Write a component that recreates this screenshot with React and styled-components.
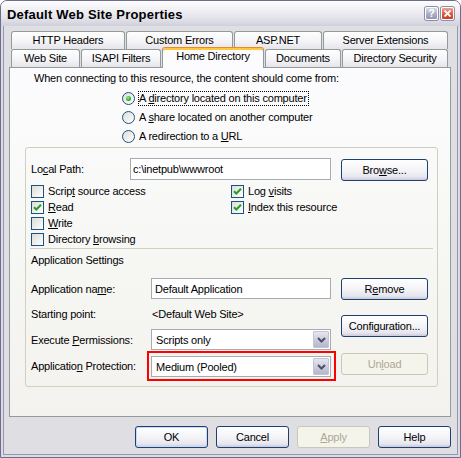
import React from 'react';
import styled, { createGlobalStyle, css } from 'styled-components';

const GlobalStyle = createGlobalStyle`
  * { box-sizing: border-box; }
  html, body { margin: 0; padding: 0; background: #ffffff; }
  body {
    font-family: "Liberation Sans", Arial, sans-serif;
    font-size: 11px;
    letter-spacing: -0.2px;
    color: #000;
  }
`;

const Window = styled.div`
  width: 461px;
  height: 458px;
  display: flex;
  flex-direction: column;
  border: 1px solid #6d6c8c;
  border-radius: 7px 7px 0 0;
  overflow: hidden;
  background: #dfdfe3;
`;

const TitleBar = styled.div`
  height: 25px;
  flex: none;
  display: flex;
  align-items: center;
  padding: 0 6px 0 6px;
  background: linear-gradient(to bottom, #fefefe 0%, #f3f3f6 30%, #e2e2e9 70%, #cfd0da 100%);
`;

const Title = styled.div`
  flex: 1;
  font-weight: bold;
  font-size: 13px;
  letter-spacing: 0.2px;
  color: #000;
  padding-top: 1px;
`;

const TitleButton = styled.div`
  width: 13px;
  height: 13px;
  margin-left: 3px;
  border-radius: 2px;
  border: 1px solid #ffffff;
  box-shadow: 0 0 0 1px #8d8ea6;
  display: flex;
  align-items: center;
  justify-content: center;
  color: #fff;
  font-weight: bold;
  font-size: 10px;
  letter-spacing: 0;
  line-height: 1;
  ${(p) =>
    p.$close
      ? css`
          background: linear-gradient(to bottom, #f0a08c, #d9553c 60%, #c2402b);
        `
      : css`
          background: linear-gradient(to bottom, #d8d9e6, #a9abc3 60%, #9496b3);
        `}
`;

const Body = styled.div`
  flex: 1;
  display: flex;
  flex-direction: column;
  border: 2px solid #dcdbe4;
  border-top: none;
  box-shadow: inset 1px 0 #9896ae, inset -1px 0 #9896ae, inset 0 -1px #9896ae;
  padding: 5px 7px 0 6px;
`;

const TabStrip = styled.div`
  display: flex;
  flex-direction: column;
  margin: 0 3px 0 2px;
`;

const TabRow = styled.div`
  display: flex;
  gap: 1px;
  height: 18px;
`;

const Tab = styled.div`
  width: ${(p) => p.$w}px;
  flex: none;
  border: 1px solid #919b9c;
  border-bottom: none;
  border-radius: 3px 3px 0 0;
  background: linear-gradient(to bottom, #ffffff, #f3f3f6 60%, #e4e4ea);
  text-align: center;
  line-height: 17px;
  white-space: nowrap;
  ${(p) =>
    p.$active &&
    css`
      position: relative;
      z-index: 2;
      height: 21px;
      margin-top: -2px;
      margin-bottom: -1px;
      background: #fcfcfe;
      border-top: 1px solid #e68b2c;
      box-shadow: inset 0 2px 0 #ffc83c;
      line-height: 17px;
    `}
`;

const Panel = styled.div`
  width: 442px;
  height: 350px;
  flex: none;
  border: 1px solid #919b9c;
  background: linear-gradient(to bottom, #fcfcfe, #f6f6f3 60%, #f3f2ee);
  display: flex;
  flex-direction: column;
  align-items: flex-start;
`;

const Intro = styled.div`
  margin: 3px 0 0 24px;
  line-height: 14px;
`;

const RadioList = styled.div`
  margin: 4px 0 0 112px;
  display: flex;
  flex-direction: column;
`;

const RadioRow = styled.div`
  height: 19px;
  display: flex;
  align-items: center;
`;

const RadioCircle = styled.span`
  width: 13px;
  height: 13px;
  flex: none;
  border-radius: 50%;
  border: 1px solid #1c5180;
  background: linear-gradient(135deg, #dcdcd7, #ffffff);
  display: flex;
  align-items: center;
  justify-content: center;
  &::after {
    content: '';
    width: 5px;
    height: 5px;
    border-radius: 50%;
    display: ${(p) => (p.$on ? 'block' : 'none')};
    background: radial-gradient(circle at 40% 35%, #8ef08a, #21a121 70%);
  }
`;

const OptionText = styled.span`
  margin-left: ${(p) => (p.$focus ? 3 : 4)}px;
  line-height: 13px;
  white-space: nowrap;
  ${(p) =>
    p.$focus &&
    css`
      border: 1px dotted #000;
      padding: 0 1px 0 0;
    `}
`;

const GroupBox = styled.div`
  width: 413px;
  margin: 1px 0 0 15px;
  border: 1px solid #d0d0bf;
  border-radius: 3px;
  padding: 10px 4px 5px 5px;
  display: flex;
  flex-direction: column;
`;

const FieldRow = styled.div`
  display: flex;
  align-items: center;
  height: ${(p) => p.$h || 21}px;
  margin-top: ${(p) => p.$mt || 0}px;
`;

const Label = styled.span`
  width: ${(p) => p.$w}px;
  flex: none;
  white-space: nowrap;
`;

const TextBox = styled.input`
  width: ${(p) => p.$w}px;
  height: ${(p) => p.$h || 21}px;
  flex: none;
  border: 1px solid #a5acb2;
  background: #fff;
  font: inherit;
  letter-spacing: inherit;
  color: #000;
  padding: 0 ${(p) => p.$pad || 3}px;
  outline: none;
`;

const Button = styled.div`
  width: ${(p) => p.$w || 87}px;
  height: 22px;
  flex: none;
  border: 1px solid #1f3f6e;
  border-radius: 3px;
  background: linear-gradient(to bottom, #ffffff, #f4f4f8 50%, #e6e6ee 85%, #c9c9db);
  display: flex;
  align-items: center;
  justify-content: center;
  white-space: nowrap;
  margin-left: ${(p) => p.$ml || 0}px;
  margin-top: ${(p) => p.$mt || 0}px;
  ${(p) =>
    p.$default &&
    css`
      box-shadow: inset 0 0 0 1px #c8daf6;
    `}
  ${(p) =>
    p.$disabled &&
    css`
      border-color: #c9c7ba;
      background: #f5f4ea;
      color: #aca899;
    `}
`;

const CheckGrid = styled.div`
  display: grid;
  grid-template-columns: 200px 1fr;
  grid-auto-rows: 16px;
  margin-top: 3px;
`;

const CheckItem = styled.div`
  display: flex;
  align-items: center;
  grid-column: ${(p) => p.$col};
  grid-row: ${(p) => p.$row};
`;

const CheckBox = styled.span`
  width: 13px;
  height: 13px;
  flex: none;
  border: 1px solid #1c5180;
  background: linear-gradient(135deg, #dcdcd7, #ffffff);
  display: flex;
  align-items: center;
  justify-content: center;
`;

const Separator = styled.div`
  width: 403px;
  height: 1px;
  margin: 1px 0 0 -1px;
  background: #d0d0bf;
`;

const SectionTitle = styled.div`
  margin-top: 4px;
  line-height: 14px;
`;

const AppArea = styled.div`
  display: flex;
  gap: 10px;
  margin-top: 11px;
`;

const AppFields = styled.div`
  width: 300px;
  display: flex;
  flex-direction: column;
`;

const AppButtons = styled.div`
  display: flex;
  flex-direction: column;
`;

const ValueText = styled.span`
  padding-left: 1px;
`;

const Highlight = styled.div`
  margin-left: -4px;
  border: 2px solid #f00;
  padding: 3px 3px 2px 2px;
`;

const Select = styled.div`
  width: 180px;
  height: 21px;
  border: 1px solid #a5acb2;
  background: #fff;
  display: flex;
  align-items: center;
  padding: 1px;
`;

const SelectValue = styled.span`
  flex: 1;
  padding-left: 3px;
`;

const DropButton = styled.span`
  width: 16px;
  height: 17px;
  border: 1px solid #c3c3d3;
  border-radius: 1px;
  background: linear-gradient(to bottom, #e6e6ef, #c8c9da 60%, #b4b6cb);
  display: flex;
  align-items: center;
  justify-content: center;
`;

const Footer = styled.div`
  display: flex;
  justify-content: flex-end;
  gap: 8px;
  margin-top: 9px;
`;

const Check = () => (
  <svg width="9" height="9" viewBox="0 0 9 9">
    <path d="M1 4.2 L3.3 6.5 L8 1.8" fill="none" stroke="#21a121" strokeWidth="2" />
  </svg>
);

const Chevron = () => (
  <svg width="9" height="6" viewBox="0 0 9 6">
    <path d="M1 1 L4.5 4.5 L8 1" fill="none" stroke="#4d5068" strokeWidth="2" />
  </svg>
);

const CloseX = () => (
  <svg width="7" height="7" viewBox="0 0 7 7">
    <path d="M0.5 0.5 L6.5 6.5 M6.5 0.5 L0.5 6.5" stroke="#fff" strokeWidth="1.8" />
  </svg>
);

const Radio = ({ on, focus, children }) => (
  <RadioRow>
    <RadioCircle $on={on} />
    <OptionText $focus={focus}>{children}</OptionText>
  </RadioRow>
);

const Option = ({ checked, col, row, children }) => (
  <CheckItem $col={col} $row={row}>
    <CheckBox>{checked && <Check />}</CheckBox>
    <OptionText>{children}</OptionText>
  </CheckItem>
);

const Dropdown = ({ value }) => (
  <Select>
    <SelectValue>{value}</SelectValue>
    <DropButton>
      <Chevron />
    </DropButton>
  </Select>
);

const topTabs = [
  { name: 'HTTP Headers', w: 114 },
  { name: 'Custom Errors', w: 107 },
  { name: 'ASP.NET', w: 88 },
  { name: 'Server Extensions', w: 125 },
];

const bottomTabs = [
  { name: 'Web Site', w: 69 },
  { name: 'ISAPI Filters', w: 80 },
  { name: 'Home Directory', w: 102, active: true },
  { name: 'Documents', w: 76 },
  { name: 'Directory Security', w: 106 },
];

export default function App() {
  return (
    <>
      <GlobalStyle />
      <Window>
        <TitleBar>
          <Title>Default Web Site Properties</Title>
          <TitleButton>?</TitleButton>
          <TitleButton $close>
            <CloseX />
          </TitleButton>
        </TitleBar>
        <Body>
          <TabStrip>
            <TabRow>
              {topTabs.map((t) => (
                <Tab key={t.name} $w={t.w}>
                  {t.name}
                </Tab>
              ))}
            </TabRow>
            <TabRow>
              {bottomTabs.map((t) => (
                <Tab key={t.name} $w={t.w} $active={t.active}>
                  {t.name}
                </Tab>
              ))}
            </TabRow>
          </TabStrip>
          <Panel>
            <Intro>When connecting to this resource, the content should come from:</Intro>
            <RadioList>
              <Radio on focus>
                A <u>d</u>irectory located on this computer
              </Radio>
              <Radio>
                A <u>s</u>hare located on another computer
              </Radio>
              <Radio>
                A redirection to a <u>U</u>RL
              </Radio>
            </RadioList>
            <GroupBox>
              <FieldRow $h={22}>
                <Label $w={99}>
                  Lo<u>c</u>al Path:
                </Label>
                <TextBox $w={201} $h={22} $pad={2} readOnly value="c:\inetpub\wwwroot" />
                <Button $ml={10} $mt={1}>
                  Bro<u>w</u>se...
                </Button>
              </FieldRow>
              <CheckGrid>
                <Option col={1} row={1}>
                  Scrip<u>t</u> source access
                </Option>
                <Option col={1} row={2} checked>
                  <u>R</u>ead
                </Option>
                <Option col={1} row={3}>
                  <u>W</u>rite
                </Option>
                <Option col={1} row={4}>
                  Directory <u>b</u>rowsing
                </Option>
                <Option col={2} row={1} checked>
                  Log <u>v</u>isits
                </Option>
                <Option col={2} row={2} checked>
                  <u>I</u>ndex this resource
                </Option>
              </CheckGrid>
              <Separator />
              <SectionTitle>Application Settings</SectionTitle>
              <AppArea>
                <AppFields>
                  <FieldRow>
                    <Label $w={120}>
                      Application na<u>m</u>e:
                    </Label>
                    <TextBox $w={180} readOnly value="Default Application" />
                  </FieldRow>
                  <FieldRow $mt={4}>
                    <Label $w={120}>Starting point:</Label>
                    <ValueText>&lt;Default Web Site&gt;</ValueText>
                  </FieldRow>
                  <FieldRow $mt={5}>
                    <Label $w={120}>
                      Execute <u>P</u>ermissions:
                    </Label>
                    <Dropdown value="Scripts only" />
                  </FieldRow>
                  <FieldRow $mt={1} $h={30}>
                    <Label $w={120}>
                      Applicatio<u>n</u> Protection:
                    </Label>
                    <Highlight>
                      <Dropdown value="Medium (Pooled)" />
                    </Highlight>
                  </FieldRow>
                </AppFields>
                <AppButtons>
                  <Button>
                    R<u>e</u>move
                  </Button>
                  <Button $mt={15}>Configuration...</Button>
                  <Button $mt={16} $disabled>
                    Un<u>l</u>oad
                  </Button>
                </AppButtons>
              </AppArea>
            </GroupBox>
          </Panel>
          <Footer>
            <Button $w={73} $default>
              OK
            </Button>
            <Button $w={73}>Cancel</Button>
            <Button $w={73} $disabled>
              <u>A</u>pply
            </Button>
            <Button $w={73}>Help</Button>
          </Footer>
        </Body>
      </Window>
    </>
  );
}
